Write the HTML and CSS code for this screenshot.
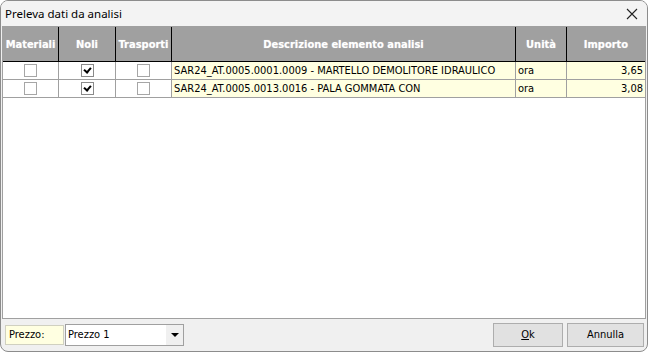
FILE: index.html
```html
<!DOCTYPE html>
<html>
<head>
    <title>Preleva dati da analisi</title>
    <link rel="stylesheet" href="styles.css">
</head>
<body>
    <div class="window">
        <div class="titlebar">
            <span class="title">Preleva dati da analisi</span>
            <span class="close">
                <svg width="12" height="12" viewBox="0 0 12 12"><path d="M1 1L11 11M11 1L1 11" stroke="#222" stroke-width="1.1" fill="none"/></svg>
            </span>
        </div>

        <div class="grid">
            <table>
                <colgroup>
                    <col class="c-mat"><col class="c-noli"><col class="c-tra"><col class="c-desc"><col class="c-um"><col class="c-imp">
                </colgroup>
                <thead>
                    <tr>
                        <th>Materiali</th>
                        <th>Noli</th>
                        <th>Trasporti</th>
                        <th>Descrizione elemento analisi</th>
                        <th>Unità</th>
                        <th>Importo</th>
                    </tr>
                </thead>
                <tbody>
                    <tr>
                        <td class="chk"><span class="box"></span></td>
                        <td class="chk"><span class="box checked"></span></td>
                        <td class="chk"><span class="box"></span></td>
                        <td class="yellow">SAR24_AT.0005.0001.0009 - MARTELLO DEMOLITORE IDRAULICO</td>
                        <td class="yellow">ora</td>
                        <td class="yellow num">3,65</td>
                    </tr>
                    <tr>
                        <td class="chk"><span class="box"></span></td>
                        <td class="chk"><span class="box checked"></span></td>
                        <td class="chk"><span class="box"></span></td>
                        <td class="yellow">SAR24_AT.0005.0013.0016 - PALA GOMMATA CON</td>
                        <td class="yellow">ora</td>
                        <td class="yellow num">3,08</td>
                    </tr>
                </tbody>
            </table>
        </div>

        <div class="bottom">
            <span class="label">Prezzo:</span>
            <div class="combo">
                <span>Prezzo 1</span>
                <span class="arrow"></span>
            </div>
            <div class="spacer"></div>
            <button class="btn"><u>O</u>k</button>
            <button class="btn">Annulla</button>
        </div>
    </div>
</body>
</html>
```

FILE: styles.css
```css
html, body { margin: 0; padding: 0; background: #ffffff; }
body { font-family: Tahoma, "DejaVu Sans Condensed", "DejaVu Sans", sans-serif; font-size: 11px; }

.window { width: 648px; height: 352px; box-sizing: border-box; border: 1px solid #8c8c8c; border-radius: 8px; background: #f0f0f0; overflow: hidden; display: flex; flex-direction: column; }

.titlebar { height: 25px; background: #f3f3f3; display: flex; align-items: center; justify-content: space-between; padding: 0 0 0 4px; }
.title { font-family: "Segoe UI", "Noto Sans", "Liberation Sans", sans-serif; font-size: 11.5px; color: #000; }
.close { width: 30px; display: flex; justify-content: center; align-items: center; }

.grid { margin: 0 1px; height: 293px; box-sizing: border-box; border: 1px solid #a0a0a0; background: #fff; overflow: hidden; }
.grid table { border-collapse: collapse; table-layout: fixed; width: 643px; margin: -1px 0 0 -1px; }
.c-mat { width: 56px; }
.c-noli { width: 57px; }
.c-tra { width: 56px; }
.c-desc { width: 344px; }
.c-um { width: 51px; }
.c-imp { width: 79px; }

th { height: 35px; box-sizing: border-box; background: #a0a0a0; color: #fff; font-weight: bold; border: 1px solid #000; padding: 0 1px; white-space: nowrap; overflow: hidden; text-shadow: 0 0 1px #d0d0d0; }
td { height: 18px; box-sizing: border-box; border: 1px solid #a0a0a0; padding: 0 2px; white-space: nowrap; overflow: hidden; color: #000; }
td.yellow { background: #ffffe1; }
td.num { text-align: right; }
td.chk { text-align: center; line-height: 0; }

.box { display: inline-block; width: 11px; height: 11px; border: 1px solid #a6a6a6; background: #fff; position: relative; vertical-align: middle; }
.box.checked { border-color: #8a8a8a; }
.box.checked::after { content: ""; position: absolute; left: 3px; top: 1px; width: 3px; height: 5px; border: solid #000; border-width: 0 2px 2px 0; transform: rotate(40deg); }

.bottom { flex: 1; display: flex; align-items: center; padding: 0 3px 1px 4px; gap: 1px; }
.label { width: 59px; height: 20px; box-sizing: border-box; background: #ffffe1; border: 1px solid #d0d0c0; display: flex; align-items: center; padding-left: 3px; }
.combo { width: 119px; height: 22px; box-sizing: border-box; border: 1px solid #a0a0a0; background: #fff; display: flex; align-items: center; justify-content: space-between; padding: 0 0 0 2px; }
.arrow { width: 17px; height: 20px; background: #f0f0f0; display: flex; align-items: center; justify-content: center; }
.arrow::after { content: ""; border-left: 4px solid transparent; border-right: 4px solid transparent; border-top: 4px solid #000; }
.spacer { flex: 1; }
.btn { width: 70px; height: 24px; box-sizing: border-box; border: 1px solid #adadad; background: #e1e1e1; font-family: Tahoma, "DejaVu Sans Condensed", "DejaVu Sans", sans-serif; font-size: 11px; color: #000; padding: 0; margin-left: 3px; }
.btn + .btn { width: 77px; }
```
